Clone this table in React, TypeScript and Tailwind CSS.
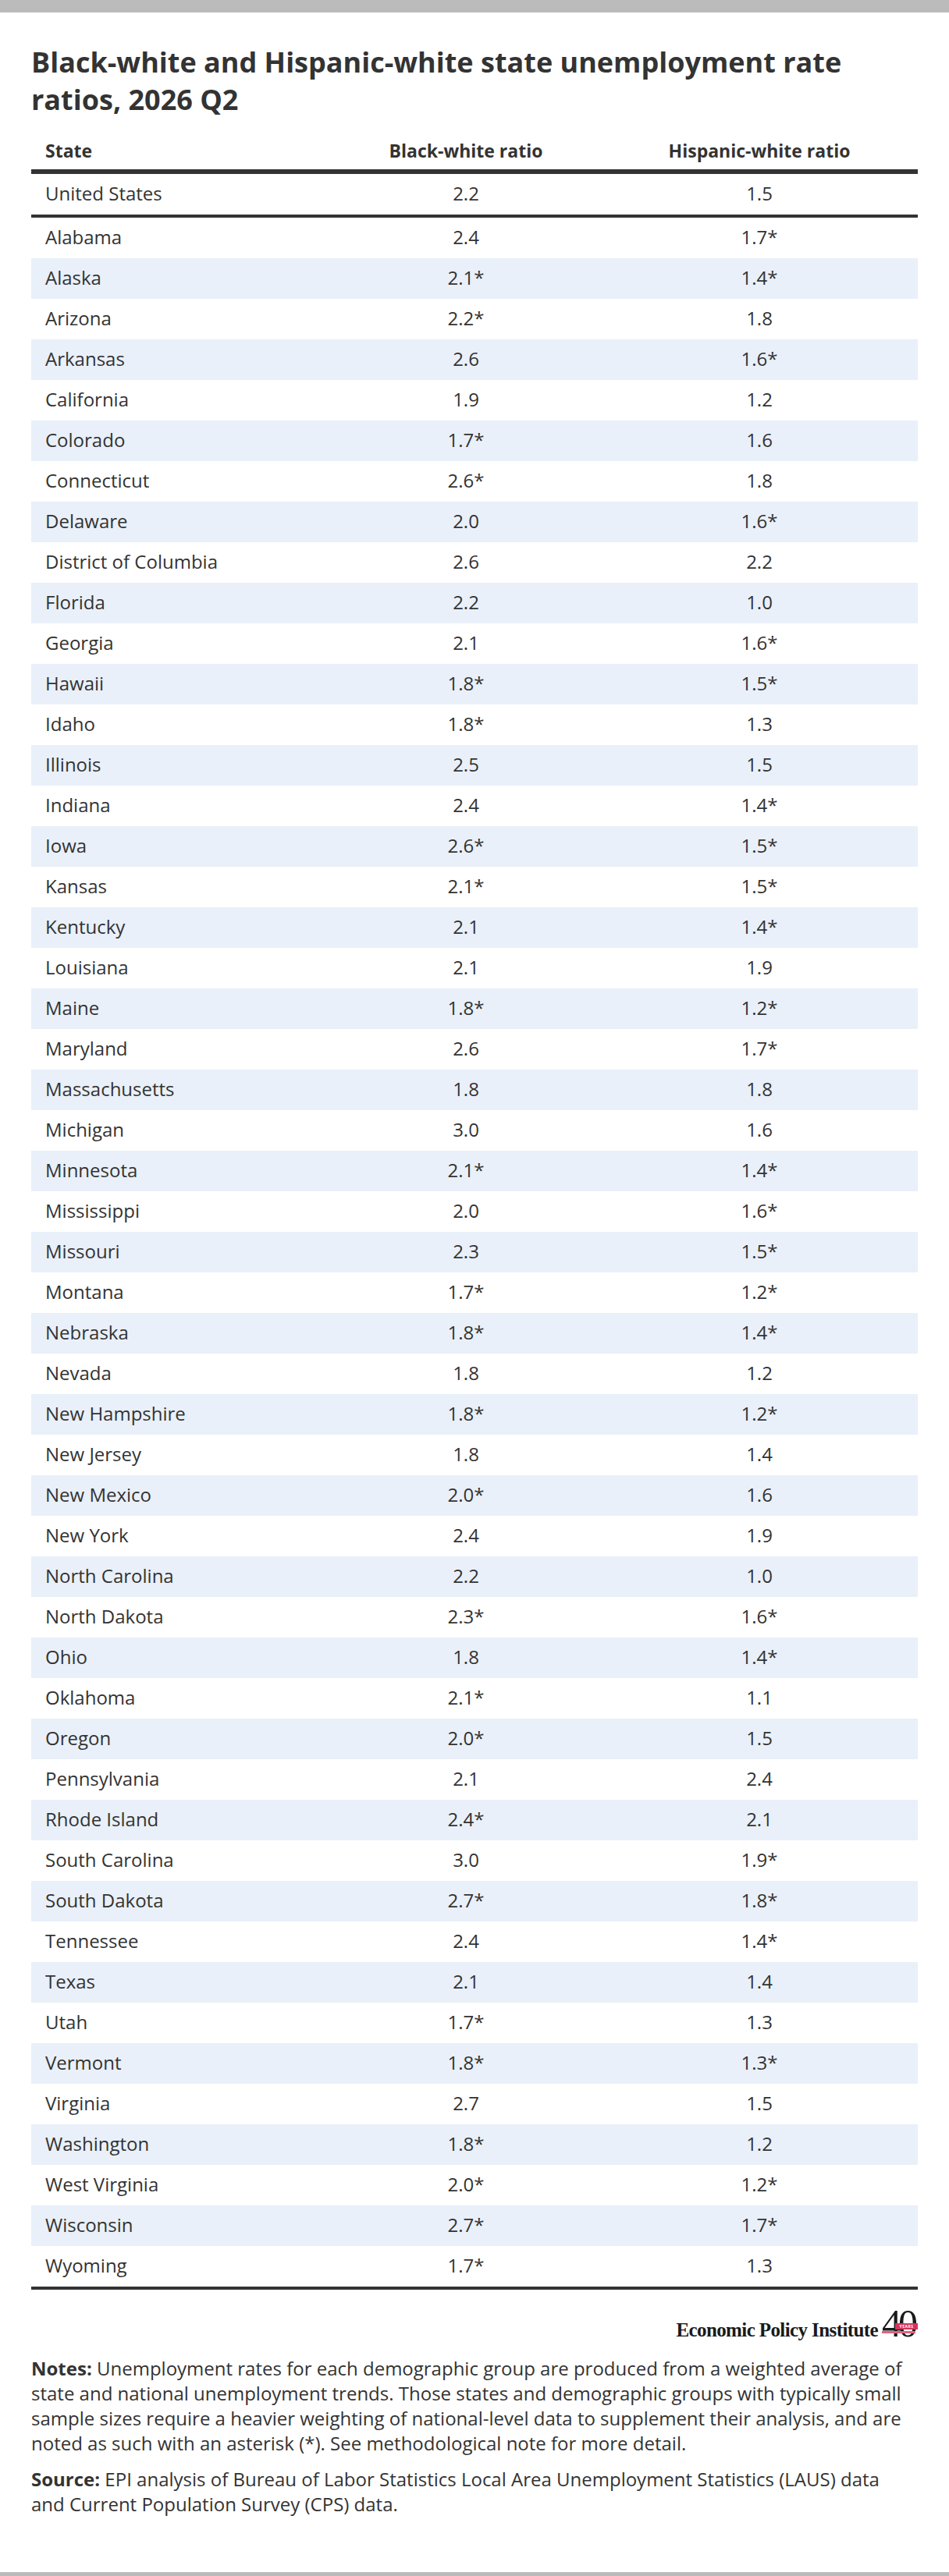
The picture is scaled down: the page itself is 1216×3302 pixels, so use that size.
import React from "react"

type Row = [string, string, string]

const rows: Row[] = [
  ["Alabama", "2.4", "1.7*"],
  ["Alaska", "2.1*", "1.4*"],
  ["Arizona", "2.2*", "1.8"],
  ["Arkansas", "2.6", "1.6*"],
  ["California", "1.9", "1.2"],
  ["Colorado", "1.7*", "1.6"],
  ["Connecticut", "2.6*", "1.8"],
  ["Delaware", "2.0", "1.6*"],
  ["District of Columbia", "2.6", "2.2"],
  ["Florida", "2.2", "1.0"],
  ["Georgia", "2.1", "1.6*"],
  ["Hawaii", "1.8*", "1.5*"],
  ["Idaho", "1.8*", "1.3"],
  ["Illinois", "2.5", "1.5"],
  ["Indiana", "2.4", "1.4*"],
  ["Iowa", "2.6*", "1.5*"],
  ["Kansas", "2.1*", "1.5*"],
  ["Kentucky", "2.1", "1.4*"],
  ["Louisiana", "2.1", "1.9"],
  ["Maine", "1.8*", "1.2*"],
  ["Maryland", "2.6", "1.7*"],
  ["Massachusetts", "1.8", "1.8"],
  ["Michigan", "3.0", "1.6"],
  ["Minnesota", "2.1*", "1.4*"],
  ["Mississippi", "2.0", "1.6*"],
  ["Missouri", "2.3", "1.5*"],
  ["Montana", "1.7*", "1.2*"],
  ["Nebraska", "1.8*", "1.4*"],
  ["Nevada", "1.8", "1.2"],
  ["New Hampshire", "1.8*", "1.2*"],
  ["New Jersey", "1.8", "1.4"],
  ["New Mexico", "2.0*", "1.6"],
  ["New York", "2.4", "1.9"],
  ["North Carolina", "2.2", "1.0"],
  ["North Dakota", "2.3*", "1.6*"],
  ["Ohio", "1.8", "1.4*"],
  ["Oklahoma", "2.1*", "1.1"],
  ["Oregon", "2.0*", "1.5"],
  ["Pennsylvania", "2.1", "2.4"],
  ["Rhode Island", "2.4*", "2.1"],
  ["South Carolina", "3.0", "1.9*"],
  ["South Dakota", "2.7*", "1.8*"],
  ["Tennessee", "2.4", "1.4*"],
  ["Texas", "2.1", "1.4"],
  ["Utah", "1.7*", "1.3"],
  ["Vermont", "1.8*", "1.3*"],
  ["Virginia", "2.7", "1.5"],
  ["Washington", "1.8*", "1.2"],
  ["West Virginia", "2.0*", "1.2*"],
  ["Wisconsin", "2.7*", "1.7*"],
  ["Wyoming", "1.7*", "1.3"],
]

function TableRow({ row, striped }: { row: Row; striped?: boolean }) {
  return (
    <div
      className={`grid grid-cols-[384px_346px_406px] h-[52px] pb-[2px] items-center text-[24px] leading-[30px] ${
        striped ? "bg-[#e9f0f9]" : "bg-white"
      }`}
    >
      <div className="pl-[18px]">{row[0]}</div>
      <div className="text-center">{row[1]}</div>
      <div className="text-center">{row[2]}</div>
    </div>
  )
}

function EpiLogo() {
  return (
    <div className="flex justify-end items-baseline h-[85px] pt-[18px]">
      <span className="font-['Liberation_Serif',serif] font-bold text-[25px] leading-none tracking-[-0.6px] text-[#1a1a1a]">
        Economic Policy Institute
      </span>
      <span className="relative ml-[5px] font-['Liberation_Serif',serif] text-[50px] leading-none text-[#1a1a1a]">
        <span className="tracking-[-4px]">4</span>0
        {/* red ribbon */}
        <span className="absolute right-0 top-[25px] w-[29px] h-[8px] bg-[#d6335c] text-white text-[5px] leading-[8px] tracking-[0.5px] text-center font-['Open_Sans',sans-serif] font-bold">
          YEARS
        </span>
        <span className="absolute left-0 right-[3px] top-[35px] h-[3px] bg-[#e0647f]" />
      </span>
    </div>
  )
}

export default function App() {
  return (
    <div className="bg-white text-[#333333] font-['Open_Sans','Noto_Sans',sans-serif]">
      <div className="h-4 bg-[#bbbbbb]" />

      <div className="px-10">
        {/* TITLE */}
        <h1 className="pt-[40px] text-[36px] leading-[48px] font-bold text-[#333333]">
          Black-white and Hispanic-white state unemployment rate ratios, 2026 Q2
        </h1>

        {/* TABLE */}
        <div className="mt-[17px]">
          <div className="grid grid-cols-[384px_346px_406px] h-[48px] leading-[48px] text-[23px] font-bold border-b-[6px] border-[#333333] box-content">
            <div className="pl-[18px]">State</div>
            <div className="text-center">Black-white ratio</div>
            <div className="text-center">Hispanic-white ratio</div>
          </div>

          <div className="border-b-4 border-[#333333]">
            <TableRow row={["United States", "2.2", "1.5"]} />
          </div>

          <div className="border-b-4 border-[#333333]">
            {rows.map((r, i) => (
              <TableRow key={r[0]} row={r} striped={i % 2 === 1} />
            ))}
          </div>
        </div>

        <EpiLogo />

        {/* NOTES */}
        <div className="text-[24px] leading-[32px] pb-[71px]">
          <p>
            <span className="font-bold">Notes:</span> Unemployment rates for each demographic group are produced from a
            weighted average of state and national unemployment trends. Those states and demographic groups with
            typically small sample sizes require a heavier weighting of national-level data to supplement their
            analysis, and are noted as such with an asterisk (*). See methodological note for more detail.
          </p>
          <p className="mt-[14px] max-w-[1090px]">
            <span className="font-bold">Source:</span> EPI analysis of Bureau of Labor Statistics Local Area
            Unemployment Statistics (LAUS) data and Current Population Survey (CPS) data.
          </p>
        </div>
      </div>

      <div className="h-[6px] bg-[#bbbbbb]" />
    </div>
  )
}
